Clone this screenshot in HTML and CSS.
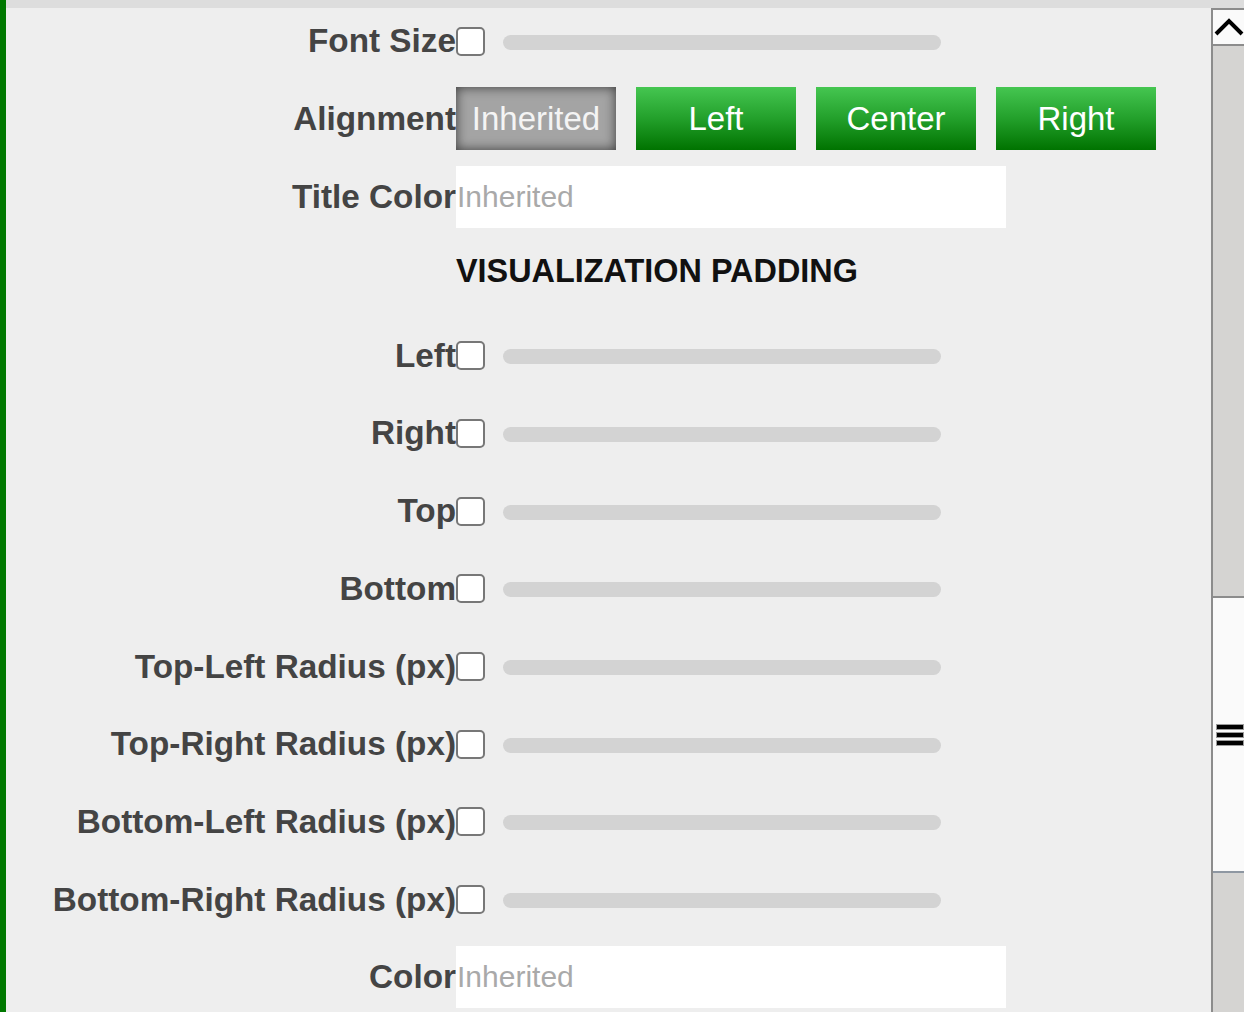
FILE: index.html
```html
<!DOCTYPE html>
<html lang="en">
<head>
<meta charset="utf-8">
<title>Visualization settings</title>
<link rel="stylesheet" href="styles.css">
</head>
<body>
<div class="app">
  <div class="topbar"></div>
  <div class="body">
    <div class="content">
      <div class="form">
        <label class="label">Font Size</label>
        <div class="ctrl"><input type="checkbox" class="check"><div class="track"></div></div>

        <label class="label">Alignment</label>
        <div class="ctrl btns">
          <button class="btn btn-active">Inherited</button>
          <button class="btn btn-green">Left</button>
          <button class="btn btn-green">Center</button>
          <button class="btn btn-green">Right</button>
        </div>

        <label class="label">Title Color</label>
        <div class="ctrl"><input type="text" class="text" placeholder="Inherited"></div>

        <div class="heading">VISUALIZATION PADDING</div>

        <label class="label">Left</label>
        <div class="ctrl"><input type="checkbox" class="check"><div class="track"></div></div>

        <label class="label">Right</label>
        <div class="ctrl"><input type="checkbox" class="check"><div class="track"></div></div>

        <label class="label">Top</label>
        <div class="ctrl"><input type="checkbox" class="check"><div class="track"></div></div>

        <label class="label">Bottom</label>
        <div class="ctrl"><input type="checkbox" class="check"><div class="track"></div></div>

        <label class="label">Top-Left Radius (px)</label>
        <div class="ctrl"><input type="checkbox" class="check"><div class="track"></div></div>

        <label class="label">Top-Right Radius (px)</label>
        <div class="ctrl"><input type="checkbox" class="check"><div class="track"></div></div>

        <label class="label">Bottom-Left Radius (px)</label>
        <div class="ctrl"><input type="checkbox" class="check"><div class="track"></div></div>

        <label class="label">Bottom-Right Radius (px)</label>
        <div class="ctrl"><input type="checkbox" class="check"><div class="track"></div></div>

        <label class="label">Color</label>
        <div class="ctrl"><input type="text" class="text" placeholder="Inherited"></div>
      </div>
    </div>
    <div class="scrollbar">
      <div class="sb-btn">
        <svg width="31" height="34" viewBox="0 0 31 34"><polyline points="3,24 16,11 29,24" fill="none" stroke="#000" stroke-width="4"/></svg>
      </div>
      <div class="sb-track-top"></div>
      <div class="sb-thumb">
        <span class="bar"></span><span class="bar"></span><span class="bar"></span>
      </div>
      <div class="sb-track-bottom"></div>
    </div>
  </div>
</div>
</body>
</html>
```

FILE: styles.css
```css
html, body {
  margin: 0;
  padding: 0;
  height: 100%;
  overflow: hidden;
  font-family: "Liberation Sans", Arial, sans-serif;
}

.app {
  height: 1012px;
  border-left: 6px solid #007800;
  display: flex;
  flex-direction: column;
}

.topbar {
  height: 8px;
  background: #dddddd;
  flex: none;
}

.body {
  flex: 1;
  display: flex;
  background: #eeeeee;
  overflow: hidden;
}

.content {
  flex: 1;
  overflow: hidden;
}

.form {
  display: grid;
  grid-template-columns: 450px 1fr;
  grid-auto-rows: auto;
  row-gap: 15.7px;
  padding-top: 2px;
}

.label {
  font-size: 33.3px;
  font-weight: bold;
  color: #444444;
  text-align: right;
  white-space: nowrap;
  line-height: 38px;
  align-self: center;
}

.ctrl {
  height: 62px;
  display: flex;
  align-items: center;
}

.check {
  appearance: none;
  -webkit-appearance: none;
  width: 29px;
  height: 29px;
  margin: 0;
  border: 2px solid #777777;
  border-radius: 5px;
  background: #ffffff;
  box-sizing: border-box;
  flex: none;
}

.track {
  width: 438px;
  height: 15px;
  margin-left: 18px;
  border-radius: 8px;
  background: #d3d3d3;
  margin-top: 2px;
}

.btns {
  height: 62.5px;
  gap: 20px;
}

.btn {
  width: 160px;
  height: 63px;
  border: none;
  margin: 0;
  padding: 0;
  font-family: "Liberation Sans", Arial, sans-serif;
  font-size: 33px;
  color: #ffffff;
}

.btn-active {
  background: #a4a4a4;
  box-shadow: inset 0 0 12px rgba(0, 0, 0, 0.65);
  color: #f4f4f4;
}

.btn-green {
  background: linear-gradient(to bottom, #45c651 0%, #23a02b 50%, #007300 100%);
}

.text {
  width: 550px;
  height: 62px;
  border: none;
  margin: 0;
  padding: 0 1px;
  box-sizing: border-box;
  background: #ffffff;
  font-family: "Liberation Sans", Arial, sans-serif;
  font-size: 30px;
  color: #333333;
  outline: none;
}

.text::placeholder {
  color: #a9a9a9;
}

.heading {
  grid-column: 2;
  height: 65.5px;
  padding-top: 9px;
  box-sizing: border-box;
  font-size: 32.4px;
  font-weight: bold;
  line-height: 37px;
  color: #111111;
  white-space: nowrap;
}

.scrollbar {
  width: 31px;
  flex: none;
  border-left: 2px solid #8c8c8c;
  border-top: 2px solid #8c8c8c;
  display: flex;
  flex-direction: column;
  background: #d5d4d2;
}

.sb-btn {
  height: 34px;
  background: #fafafa;
  border-bottom: 2px solid #8c8c8c;
  flex: none;
}

.sb-btn svg {
  display: block;
}

.sb-track-top {
  height: 550px;
  flex: none;
}

.sb-thumb {
  height: 273px;
  flex: none;
  background: #fafafa;
  border-top: 2px solid #8c8c8c;
  border-bottom: 2px solid #8e97a2;
  display: flex;
  flex-direction: column;
  justify-content: center;
  align-items: flex-start;
  gap: 4px;
}

.bar {
  display: block;
  width: 26px;
  height: 4px;
  margin-left: 4px;
  background: #000000;
  box-shadow: 0 0 0 1px #9a9a9a;
}

.sb-track-bottom {
  flex: 1;
}
```
